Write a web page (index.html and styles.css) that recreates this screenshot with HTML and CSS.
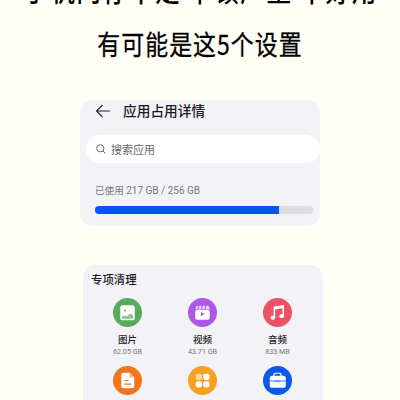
FILE: index.html
```html
<!DOCTYPE html>
<html lang="zh-CN">
<head>
<meta charset="utf-8">
<title>应用占用详情</title>
<link rel="stylesheet" href="styles.css">
</head>
<body>
<header class="hero">
  <div class="line first"><span>手机内存不足</span><span>卡顿严重</span><span>不好用</span></div>
  <div class="line second">有可能是这5个设置</div>
</header>
<section class="card usage">
  <div class="bar">
    <svg width="16" height="14" viewBox="0 0 16 14" fill="none" stroke="#222" stroke-width="1.1"><path d="M15 7H1.500M7.500 1L1.500 7l6 6"/></svg>
    <h1>应用占用详情</h1>
  </div>
  <div class="search">
    <svg width="10" height="10" viewBox="0 0 10 10" fill="none" stroke="#666" stroke-width="1"><circle cx="4.300" cy="4.300" r="3.600"/><path d="M7 7l2.500 2.500"/></svg>
    <span>搜索应用</span>
  </div>
  <p class="used">已使用 <span>217 GB / 256 GB</span></p>
  <div class="track"><div class="fill"></div></div>
</section>
<section class="card clean">
  <h2>专项清理</h2>
  <div class="grid">
    <div class="item">
      <svg class="icon" viewBox="0 0 28 28"><circle cx="14" cy="14" r="14" fill="#5aaa5c"/><rect x="7" y="7" width="14" height="14.500" rx="2.500" fill="#fff"/><circle cx="11.500" cy="12" r="1" fill="#5aaa5c"/><path d="M8.500 19.500v-1q2-2.500 4-1 1.500.500 2.500-1t2.500-1 2 2v2q0 .500-.500.500H9z" fill="#8bc58d"/></svg>
      <b>图片</b><small>62.05 GB</small>
    </div>
    <div class="item">
      <svg class="icon" viewBox="0 0 28 28"><circle cx="14" cy="14" r="14" fill="#ac59e8"/><path d="M7 11l1.200-3.500h11.600L21 11z" fill="#ead1fb"/><path d="M10.500 7l-1 4M14 7l-1 4M17.500 7l-1 4" stroke="#ac59e8" stroke-width="1"/><rect x="7" y="11.500" width="14" height="9.500" rx="2" fill="#fff"/><path d="M12.500 13.500v4l3.500-2z" fill="#ac59e8"/></svg>
      <b>视频</b><small>43.71 GB</small>
    </div>
    <div class="item">
      <svg class="icon" viewBox="0 0 28 28"><circle cx="14" cy="14" r="14" fill="#ec5266"/><path d="M11 19V9l8.500-1.500V17.500M11 10.500l8.500-1.500" fill="none" stroke="#fff" stroke-width="1.500" stroke-linejoin="round"/><ellipse cx="9.500" cy="19" rx="2.200" ry="1.900" fill="#fff"/><ellipse cx="18" cy="17.500" rx="2.200" ry="1.900" fill="#fff"/></svg>
      <b>音频</b><small>833 MB</small>
    </div>
    <div class="item">
      <svg class="icon" viewBox="0 0 28 28"><circle cx="14" cy="14" r="14" fill="#f2751f"/><path d="M10 6.500h6l4.500 4.500v8.500a2 2 0 0 1-2 2H10a2 2 0 0 1-2-2v-11a2 2 0 0 1 2-2z" fill="#fff"/><path d="M16 6.500v4.500h4.500z" fill="#f8b78a"/><path d="M11 14h4M11 17.500h6.500" stroke="#f2751f" stroke-width="1"/></svg>
    </div>
    <div class="item">
      <svg class="icon" viewBox="0 0 28 28"><circle cx="14" cy="14" r="14" fill="#f7a021"/><rect x="7.500" y="7.500" width="6" height="6" rx="2" fill="#fcdca5"/><g fill="#fff"><rect x="14.700" y="7.500" width="6" height="6" rx="2"/><rect x="7.500" y="14.700" width="6" height="6" rx="2"/><rect x="14.700" y="14.700" width="6" height="6" rx="2"/></g></svg>
    </div>
    <div class="item">
      <svg class="icon" viewBox="0 0 28 28"><circle cx="14" cy="14" r="14" fill="#0a59e8"/><path d="M10.500 10V8.500q0-1.500 1.500-1.500h4q1.500 0 1.500 1.500V10" fill="none" stroke="#fff" stroke-width="1.200"/><rect x="6.500" y="9.500" width="15.500" height="11.500" rx="2.500" fill="#fff"/><path d="M6.500 14.500h15.500" stroke="#0a59e8" stroke-width=".8"/><rect x="11.500" y="13.500" width="5.500" height="2.200" rx="1" fill="#6b9bf2"/></svg>
    </div>
  </div>
</section>
</body>
</html>
```
FILE: styles.css
```css
* { box-sizing: border-box; margin: 0; padding: 0; }
html { height: 400px; overflow: hidden; }
body {
  width: 400px;
  height: 400px;
  overflow: hidden;
  background: #fffff5;
  font-family: Roboto, "Noto Sans CJK SC", sans-serif;
  color: #1c1c1e;
}
svg { display: block; flex: none; }
.hero { height: 100px; overflow: hidden; color: #000; white-space: nowrap; }
.line { display: flex; justify-content: center; height: 40px; line-height: 40px; font-weight: 500; transform: scaleX(.85); }
.first { font-size: 29px; letter-spacing: 1.8px; margin: -28px -31px 0 -29px; gap: 8px; }
.second { font-size: 27px; font-weight: 400; font-family: "Noto Sans CJK SC", sans-serif; letter-spacing: 1.2px; margin-top: 12px; -webkit-text-stroke: .3px #000; }
.card { background: #f2f2f7; border-radius: 13px; width: 240px; }
.usage { height: 126px; margin-left: 80px; }
.bar { display: flex; align-items: center; height: 21px; padding-left: 15px; gap: 12px; }
h1 { font-size: 13.7px; font-weight: 500; line-height: 20px; }
.search {
  display: flex; align-items: center; gap: 5px;
  height: 28px; margin: 14px 0 0 6px; padding-left: 10px;
  border-radius: 14px; background: #fff; font-size: 11px; color: #666;
}
.used { margin: 20px 0 0 15px; font-size: 9.6px; line-height: 16px; color: #777; }
.used span { font-size: 10px; }
.track { width: 218px; height: 8px; margin: 7px 0 0 15px; border-radius: 4px; background: #dcdddf; overflow: hidden; }
.fill { width: 184px; height: 8px; background: #0456f3; }
.clean { height: 135px; margin: 39px 0 0 83px; padding-top: 6px; border-radius: 13px 13px 0 0; overflow: hidden; }
h2 { padding-left: 8px; font-size: 11.4px; font-weight: 500; line-height: 18px; }
.grid { display: grid; grid-template-columns: repeat(3, 75px); grid-auto-rows: 68px; margin: 9px 0 0 7px; }
.item { display: flex; flex-direction: column; align-items: center; }
.icon { width: 29px; height: 29px; }
.item b { margin-top: 5px; font-size: 9.5px; font-weight: 500; line-height: 15px; }
.item small { font-size: 7.200px; line-height: 9px; color: #777; }
```
